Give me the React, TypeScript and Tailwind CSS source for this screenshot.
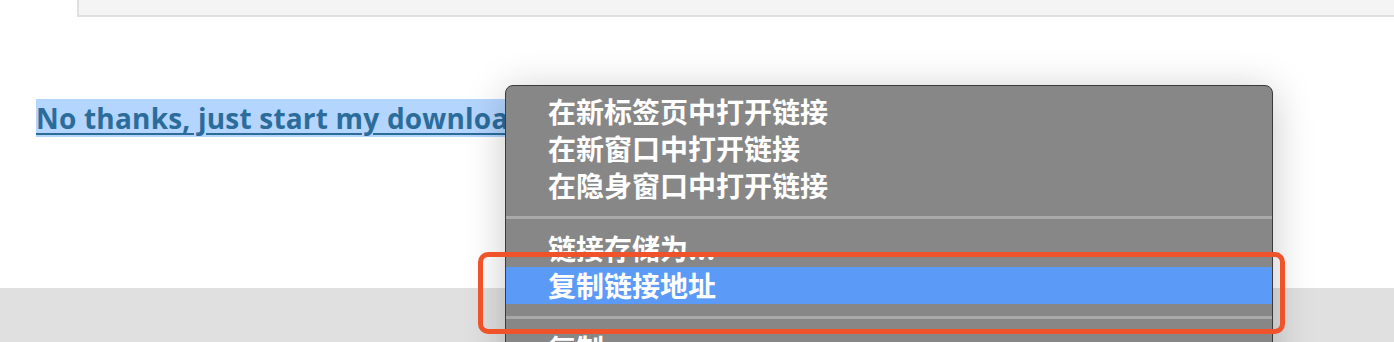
import React from "react";

const CJK = { fontFamily: '"Noto Sans CJK SC", "Noto Sans", sans-serif' };

type Entry = { label: string; active?: boolean } | "sep";

const MENU: Entry[] = [
  { label: "在新标签页中打开链接" },
  { label: "在新窗口中打开链接" },
  { label: "在隐身窗口中打开链接" },
  "sep",
  { label: "链接存储为..." },
  { label: "复制链接地址", active: true },
  "sep",
  { label: "复制" },
];

function ContextMenu() {
  return (
    <div
      className="absolute left-[505px] top-[85px] w-[768px] h-[300px] rounded-[8px] border border-[#3a3a3a] bg-[#878787] pt-[7px] shadow-[0_6px_40px_rgba(0,0,0,0.22)] overflow-hidden"
      style={CJK}
    >
      {MENU.map((item, i) =>
        item === "sep" ? (
          <div key={i} className="h-[26px] flex items-center">
            <div className="h-[3px] w-full bg-[#a9a9a9]" />
          </div>
        ) : (
          <div
            key={i}
            className={`h-[37px] pl-[42px] text-[28px] leading-[37px] text-white font-semibold whitespace-nowrap ${
              item.active ? "bg-[#5b9af7]" : ""
            }`}
          >
            {item.label}
          </div>
        )
      )}
    </div>
  );
}

export default function App() {
  return (
    <div className="relative h-[342px] w-[1394px] overflow-hidden bg-white">
      <div className="ml-[77px] h-[17px] bg-[#f4f4f4] border-l-2 border-b-2 border-[#e0e0e0]" />

      <div className="pl-[36px] pt-[81px] h-[271px]">
        <a
          href="#"
          className="bg-[#b4d5fe] text-[#2b6c9b] font-bold underline decoration-2 underline-offset-[4px] text-[28px] leading-[40px] tracking-[0.2px]"
          style={{ fontFamily: '"Open Sans", sans-serif' }}
        >
          No thanks, just start my download
        </a>
      </div>

      <div className="h-[54px] bg-[#e0e0e0]" />

      <ContextMenu />

      {/* annotation box */}
      <div className="absolute left-[478px] top-[252px] w-[807px] h-[82px] rounded-[10px] border-[5px] border-[#f0522a]" />
    </div>
  );
}
